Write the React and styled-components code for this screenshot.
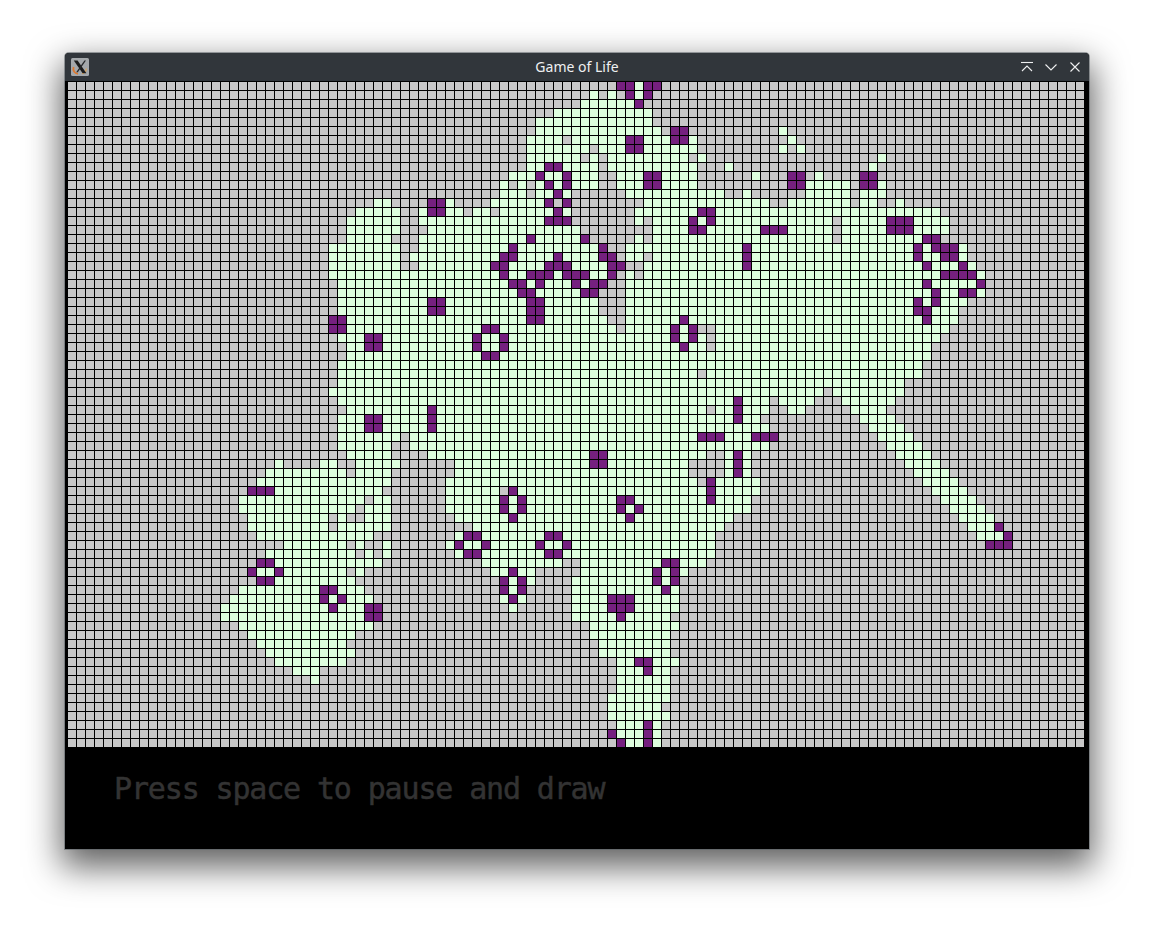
import React from "react";
import styled, { createGlobalStyle } from "styled-components";

const Global = createGlobalStyle`
  html, body { margin: 0; padding: 0; background: #fff; }
`;

const ROWS = [
  ["63", "61 62 64 65"],
  ["58 60 63", "62 64"],
  ["57-62", "63"],
  ["54-64", ""],
  ["52-64", ""],
  ["52-65 79", "67 68"],
  ["51-54 56-61 64-66 69 80", "62 63 67 68"],
  ["51-57 59-61 64-69 79 81", "62 63"],
  ["51-56 58 60-68 70 90", ""],
  ["51 52 55-58 60-69 73 89", "53 54"],
  ["49-51 53 54 56-58 61-63 66-69 76 83", "52 55 64 65 80 81 88 89"],
  ["48 50 52 54 56-58 61-63 66-69 82-86 88 90", "53 55 64 65 80 81 88 89"],
  ["48-50 52 53 55 62-72 75 82-86 88-90", "54"],
  ["34 35 42 47-52 64-77 80-86 88 89 92", "40 41 53 55"],
  ["32-36 39 42 43 45 46 48-53 55 63-69 72-96", "40 41 54 70 71"],
  ["31-36 39-52 63 65-68 70 72-84 86-90 94-97", "53 54 55 69 71 91 92 93"],
  ["31-36 40-56 65-68 71-76 80-84 86-90 94-97", "69 70 77 78 79 91 92 93"],
  ["31-35 39-50 52-56 63 65-84 86-94", "51 57 95 96"],
  ["29-36 39-48 50-58 62-74 76-93 95 99", "49 59 75 94 96 97 98"],
  ["29-36 38-47 50-53 55-58 62 63 65-74 76-93 95 96 99", "48 49 54 59 60 75 94 97 98"],
  ["29-36 39-46 49-52 56-59 64-74 76-94 96-98 100", "47 48 53 54 55 60 61 75 95 99"],
  ["29-47 49 50 54 58 59 62 64-96 101", "48 51 52 53 55 56 57 60 97 98 99 100"],
  ["30-48 51 53-55 57 62-94 96-100", "49 50 52 56 58 59 95 101"],
  ["30-49 52-56 62-95 97 98 101", "50 51 57 58 96 99 100"],
  ["30-39 42-50 53-58 62-93 95 97-99", "40 41 51 52 94 96"],
  ["30-39 42-50 53-58 62-93 96-98", "40 41 51 52 94 95"],
  ["31-50 53-59 62-67 69-94 96-98", "29 30 51 52 68 95"],
  ["31-45 48-60 62-66 68 72-97", "29 30 46 47 67 69"],
  ["30-32 35-44 46 47 49-66 68 70 72-96", "33 34 45 48 67 69"],
  ["31 32 35-44 46 47 49-67 69 70 72-95", "33 34 45 48 68"],
  ["31-45 48-95", "46 47"],
  ["30-94", ""],
  ["30-69 71-94", ""],
  ["30-92", ""],
  ["29-83 85-92", ""],
  ["30-77 79-82 86-91", "74"],
  ["31-70 72-77 80 81 87-90", "40 74"],
  ["30-76 88-91", "33 34 40 74"],
  ["30-77 89-92", "33 34 40"],
  ["30-36 38-78 90-93", "70 71 72 76 77 78"],
  ["30-35 38-77 91-94", ""],
  ["31-35 40-70 73 75 92-95", "58 59 74"],
  ["23 28 29 32-36 43-68 73 75 93-96", "58 59 74"],
  ["22-30 32-35 43-68 73 75 94-97", "74"],
  ["21-35 42-69 72-76 95-98", "71"],
  ["23-34 42-47 50-70 72-76 96-99", "20 21 22 49 71"],
  ["19-32 34 35 42-47 49 51-60 63-70 72-75 97-100", "48 50 61 62 71"],
  ["19-31 33-35 42-47 49 51-60 62 64-75 98-101", "48 50 61 63"],
  ["20-28 30 33-35 43-48 50-61 63-73 99-102", "49 62"],
  ["20-28 30-35 45-72 100-102", "103"],
  ["21-33 43 46-52 55-71 101-103", "44 45 53 54 104"],
  ["24-30 32 35 42 44 45 47-51 53 54 56-71", "43 46 52 55 102 103 104"],
  ["22-31 33 35 43 46-52 55-71", "44 45 53 54"],
  ["23-34 46-54 57-65 68-70", "21 22 66 67"],
  ["21 22 24-30 32 47 48 50 51 57-64 66 68", "20 23 49 65 67"],
  ["23-31 49 51 56-64 66", "21 22 48 50 65 67"],
  ["19-27 30-32 49 56-65 67", "28 29 48 50 66"],
  ["18-27 29 31-33 48 50 56-59 63-67", "28 30 49 60 61 62"],
  ["17-28 30-32 49 56-59 63-67", "29 33 34 60 61 62"],
  ["17-32 56-60 62-66", "33 34 61"],
  ["19-33 58-67", ""],
  ["20-31 58-66", ""],
  ["21-30 59-66", ""],
  ["22-31 59-66", ""],
  ["23-30 61 62 65-67", "63 64"],
  ["25-27 61-63 65 66", "64"],
  ["27 61-66", ""],
  ["61-66", ""],
  ["60-66", ""],
  ["60-65", ""],
  ["60-66", ""],
  ["61-63 65", "64"],
  ["61-63 65", "60 64"],
  ["62 63 65", "61 64"],
];

const COLS = 113;

function expand(spec) {
  const out = new Set();
  spec.split(" ").filter(Boolean).forEach((part) => {
    const [a, b] = part.split("-").map(Number);
    for (let i = a; i <= (b ?? a); i++) out.add(i);
  });
  return out;
}

const CELLS = ROWS.flatMap(([g, p]) => {
  const green = expand(g);
  const purple = expand(p);
  return Array.from({ length: COLS }, (_, c) =>
    purple.has(c) ? "alive" : green.has(c) ? "visited" : "dead"
  );
});

const CELL_COLORS = { dead: "#c8c8c8", visited: "#deffde", alive: "#75207f" };

const Page = styled.div`
  width: 1154px;
  height: 926px;
  padding: 53px 0 0 65px;
  box-sizing: border-box;
  background: #fff;
  overflow: hidden;
`;

const Window = styled.div`
  width: 1024px;
  height: 796px;
  display: flex;
  flex-direction: column;
  border-radius: 4px 4px 0 0;
  background: #000;
  box-shadow: 0 0 0 1px rgba(90, 96, 102, 0.55), 0 14px 34px 4px rgba(0, 0, 0, 0.62);
`;

const TitleBar = styled.header`
  height: 28px;
  flex: none;
  display: grid;
  grid-template-columns: 1fr auto 1fr;
  align-items: center;
  padding: 0 6px;
  background: #31363b;
  border-radius: 4px 4px 0 0;
`;

const AppIcon = styled.svg`
  width: 18px;
  height: 18px;
  display: block;
`;

const Title = styled.div`
  font-family: "Noto Sans", sans-serif;
  font-size: 14px;
  color: #eff0f1;
  line-height: 28px;
`;

const Buttons = styled.div`
  display: flex;
  justify-content: flex-end;
  gap: 8px;
`;

const ButtonIcon = styled.svg`
  width: 16px;
  height: 16px;
  display: block;
  fill: none;
  stroke: #eff0f1;
  stroke-width: 1.1;
`;

const Board = styled.main`
  flex: none;
  display: grid;
  grid-template-columns: repeat(${COLS}, 8px);
  grid-auto-rows: 8px;
  gap: 1px;
  padding: 1px 0 0 3px;
  background: #000;
`;

const Cell = styled.div`
  background: ${(p) => CELL_COLORS[p.$state]};
`;

const Footer = styled.footer`
  flex: 1;
  padding: 0 0 0 49px;
  display: flex;
  align-items: flex-start;
  background: #000;
`;

const Hint = styled.div`
  margin-top: 24px;
  font-family: "DejaVu Sans Mono", monospace;
  font-size: 30px;
  line-height: 36px;
  letter-spacing: -1.15px;
  color: #333333;
  -webkit-text-stroke: 0.5px #333333;
  white-space: nowrap;
`;

export default function App() {
  return (
    <Page>
      <Global />
      <Window>
        <TitleBar>
          <AppIcon viewBox="0 0 18 18">
            <rect x="0" y="0" width="18" height="18" rx="1.5" fill="#a4a8ab" />
            <path d="M2.6 9 C1.6 12.5 3.5 15.6 7 15.8" fill="none" stroke="#e0782c" strokeWidth="1.8" />
            <path d="M11 15.6 C13.6 15 15.2 13 15.3 10.5" fill="none" stroke="#d9a35c" strokeWidth="1.3" />
            <path d="M2.8 2.6 L6.6 2.6 L15.4 15.2 L11.6 15.2 Z" fill="#1b1b1b" />
            <path d="M13.4 2.4 L15 2.4 L6.8 14.2 L5.2 14.2 Z" fill="#26282a" />
          </AppIcon>
          <Title>Game of Life</Title>
          <Buttons>
            <ButtonIcon viewBox="0 0 16 16">
              <path d="M2 3.5 H14" />
              <path d="M3 12 L8 7 L13 12" />
            </ButtonIcon>
            <ButtonIcon viewBox="0 0 16 16">
              <path d="M2.5 5.5 L8 11 L13.5 5.5" />
            </ButtonIcon>
            <ButtonIcon viewBox="0 0 16 16">
              <path d="M3.5 3.5 L12.5 12.5 M12.5 3.5 L3.5 12.5" />
            </ButtonIcon>
          </Buttons>
        </TitleBar>
        <Board>
          {CELLS.map((state, i) => (
            <Cell key={i} $state={state} />
          ))}
        </Board>
        <Footer>
          <Hint>Press space to pause and draw</Hint>
        </Footer>
      </Window>
    </Page>
  );
}
